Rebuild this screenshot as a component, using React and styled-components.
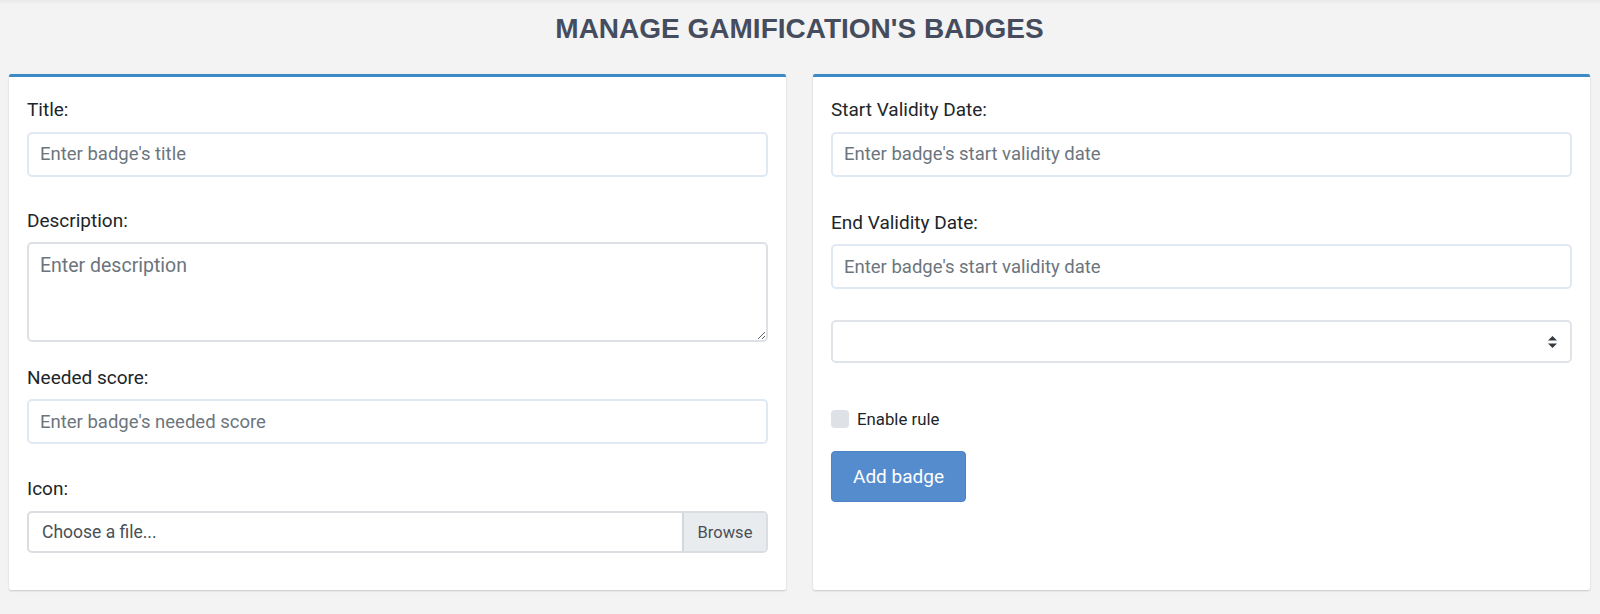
import styled, { createGlobalStyle } from "styled-components";

const GlobalStyle = createGlobalStyle`
    * { box-sizing: border-box; }
    body {
        margin: 0;
        background: linear-gradient(#e8e8e8 0, #f3f3f3 4px) #f3f3f3;
        font-family: Roboto, "Liberation Sans", sans-serif;
        color: #212529;
    }
`

const Page = styled.div`
    min-height: 614px;
    padding: 0 10px 20px 9px;
`

const Heading = styled.h1`
    margin: 0 0 28px;
    padding-top: 12px;
    line-height: 34px;
    font-family: "Liberation Sans", Arial, sans-serif;
    font-size: 28px;
    font-weight: 700;
    color: #454c5e;
    text-align: center;
`

const Columns = styled.div`
    display: grid;
    grid-template-columns: 1fr 1fr;
    gap: 27px;
    align-items: stretch;
`

const Panel = styled.section`
    background: #fff;
    border-top: 3px solid #3b8bc6;
    border-radius: 2px;
    box-shadow: 0 1px 2px rgba(0, 0, 0, 0.18);
    padding: 21px 18px 37px;
    display: flex;
    flex-direction: column;
    align-items: stretch;
`

const Field = styled.div`
    display: flex;
    flex-direction: column;
    margin-bottom: ${props => props.$mb || 0}px;
`

const Label = styled.label`
    font-size: 19px;
    line-height: 24px;
    color: #212529;
    margin-bottom: 9.5px;
`

const TextInput = styled.input`
    height: 45px;
    border: 2px solid #e0e8f1;
    border-radius: 5px;
    padding: 0 11px;
    font-family: Roboto, sans-serif;
    font-size: 18.5px;
    color: #495057;
    background: #fff;
    outline: none;
    &::placeholder { color: #6c757d; }
`

const TextArea = styled.textarea`
    height: 100px;
    border: 2px solid #dde1e6;
    border-radius: 5px;
    padding: 10px 11px;
    font-family: Roboto, sans-serif;
    font-size: 19.5px;
    color: #495057;
    resize: vertical;
    outline: none;
    &::placeholder { color: #6c757d; }
`

const FileBox = styled.div`
    display: flex;
    height: 42.5px;
    border: 2px solid #dadee3;
    border-radius: 5px;
    overflow: hidden;
    background: #fff;
`

const FileName = styled.span`
    flex: 1;
    display: flex;
    align-items: center;
    padding-left: 13px;
    font-size: 17.5px;
    color: #495057;
`

const Browse = styled.span`
    width: 84px;
    display: flex;
    align-items: center;
    justify-content: center;
    border-left: 2px solid #d3d8de;
    background: #e9ecef;
    font-size: 16.5px;
    color: #495057;
`

const SelectWrap = styled.div`
    position: relative;
    margin-bottom: ${props => props.$mb || 0}px;
`

const Select = styled.select`
    width: 100%;
    height: 43px;
    border: 2px solid #e0e3e8;
    border-radius: 5px;
    background: #fff;
    appearance: none;
    font-family: Roboto, sans-serif;
    font-size: 18.5px;
    outline: none;
`

const Arrows = styled.svg`
    position: absolute;
    right: 15px;
    top: 16px;
    pointer-events: none;
`

const CheckRow = styled.label`
    display: flex;
    align-items: center;
    gap: 8px;
    height: 24px;
    margin-bottom: 20.7px;
    font-size: 16.8px;
    color: #212529;
`

const Check = styled.input`
    appearance: none;
    margin: 0;
    width: 18px;
    height: 18px;
    border-radius: 4px;
    background: #dee2e6;
`

const Button = styled.button`
    align-self: flex-start;
    width: 135px;
    height: 50.6px;
    border: 1px solid #4d84c6;
    border-radius: 4px;
    background: #558cce;
    color: #fff;
    font-family: Roboto, sans-serif;
    font-size: 19px;
    cursor: pointer;
`

function App() {
    return (
        <Page>
            <GlobalStyle />
            <Heading>MANAGE GAMIFICATION'S BADGES</Heading>
            <Columns>
                <Panel>
                    <Field $mb={32.3}>
                        <Label>Title:</Label>
                        <TextInput placeholder="Enter badge's title" />
                    </Field>
                    <Field $mb={23.5}>
                        <Label>Description:</Label>
                        <TextArea placeholder="Enter description" />
                    </Field>
                    <Field $mb={33}>
                        <Label>Needed score:</Label>
                        <TextInput placeholder="Enter badge's needed score" />
                    </Field>
                    <Field>
                        <Label>Icon:</Label>
                        <FileBox>
                            <FileName>Choose a file...</FileName>
                            <Browse>Browse</Browse>
                        </FileBox>
                    </Field>
                </Panel>
                <Panel>
                    <Field $mb={34}>
                        <Label>Start Validity Date:</Label>
                        <TextInput placeholder="Enter badge's start validity date" />
                    </Field>
                    <Field $mb={31}>
                        <Label>End Validity Date:</Label>
                        <TextInput placeholder="Enter badge's start validity date" />
                    </Field>
                    <SelectWrap $mb={43.5}>
                        <Select defaultValue="">
                            <option value=""></option>
                        </Select>
                        <Arrows width="9" height="12" viewBox="0 0 9 12">
                            <path d="M4.5 0 L9 4.5 H0 Z" fill="#343a40" />
                            <path d="M4.5 12 L9 7.5 H0 Z" fill="#343a40" />
                        </Arrows>
                    </SelectWrap>
                    <CheckRow>
                        <Check type="checkbox" />
                        Enable rule
                    </CheckRow>
                    <Button>Add badge</Button>
                </Panel>
            </Columns>
        </Page>
    )
}

export default App;
